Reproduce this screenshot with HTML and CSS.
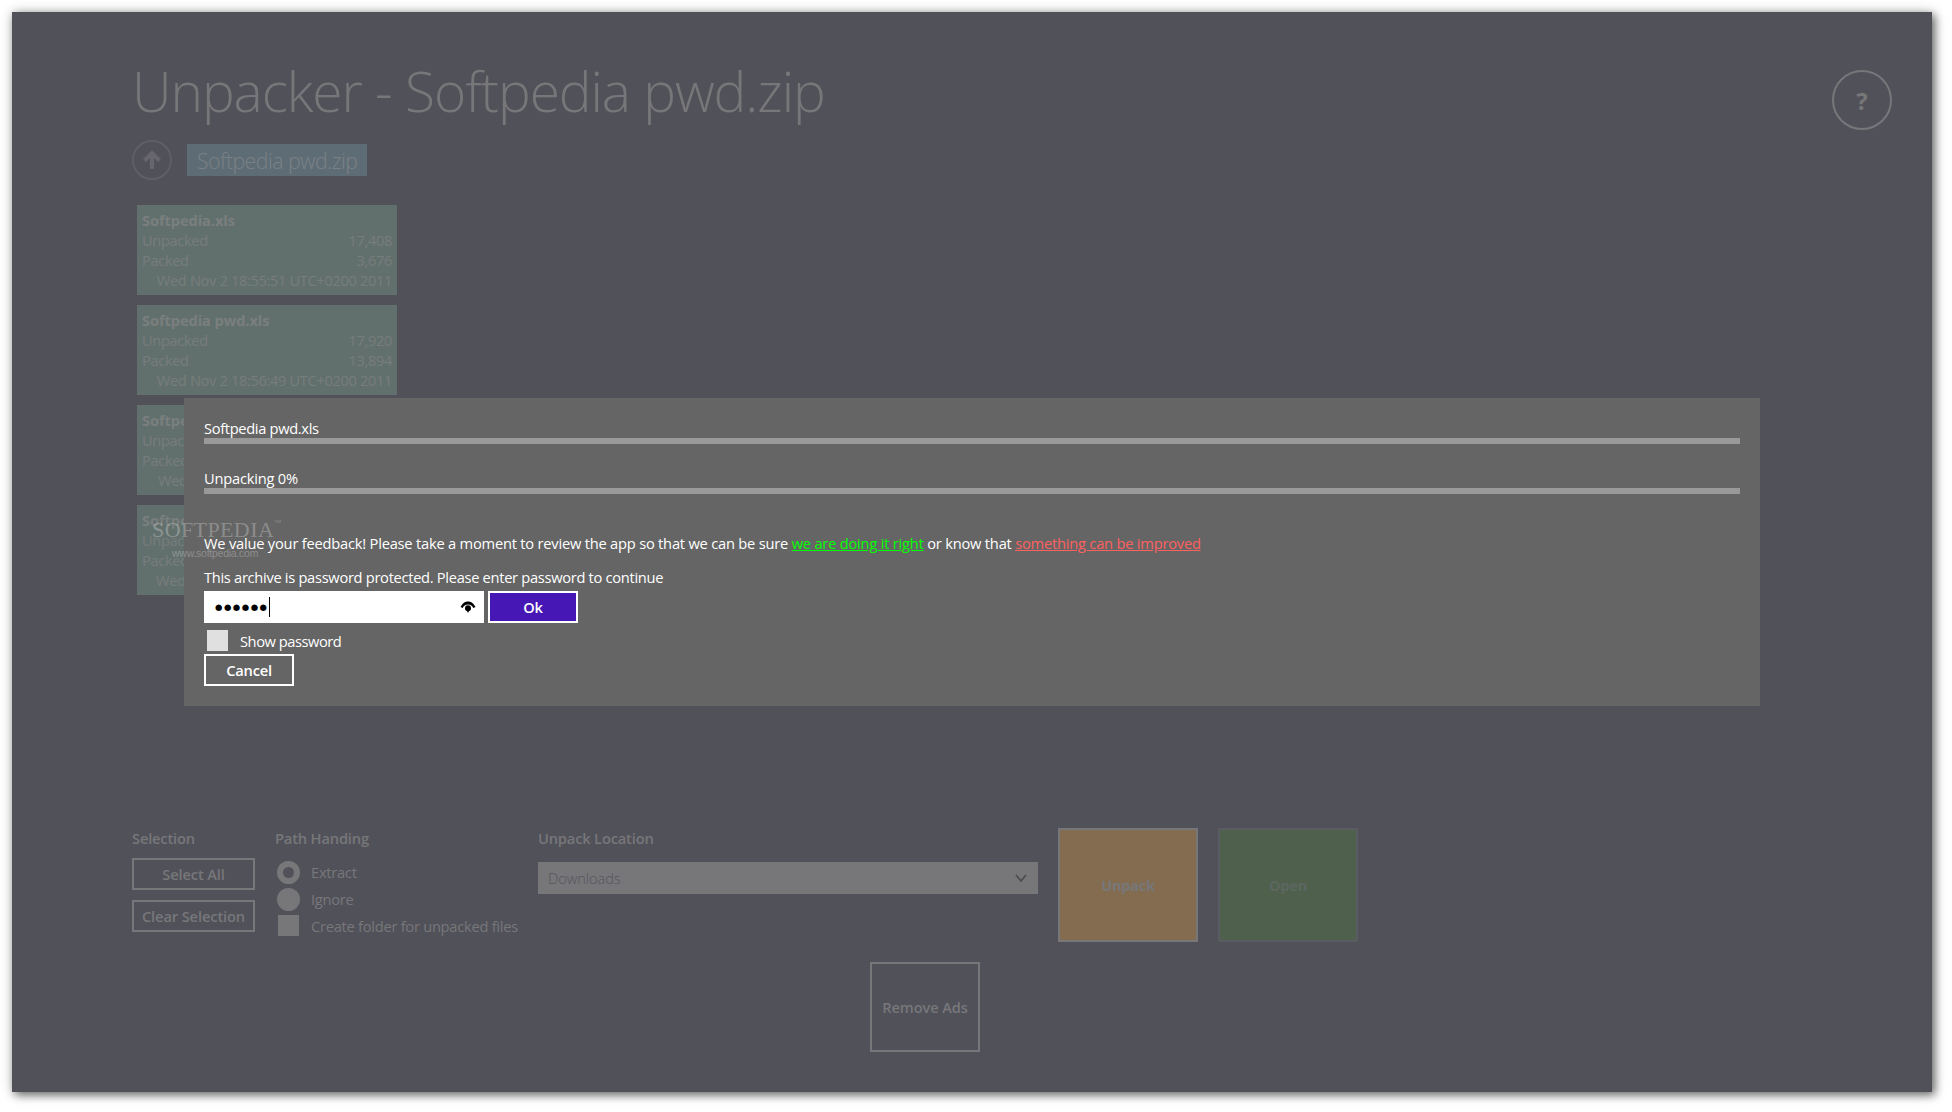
FILE: index.html
```html
<!DOCTYPE html>
<html lang="en">
<head>
<meta charset="utf-8">
<title>Unpacker</title>
<link rel="stylesheet" href="styles.css">
</head>
<body>
<div class="window">
  <header class="top">
    <h1 class="title">Unpacker - Softpedia pwd.zip</h1>
    <div class="help">?</div>
  </header>
  <nav class="crumbs">
    <div class="up">
      <svg width="40" height="40" viewBox="0 0 40 40"><circle cx="20" cy="20" r="19" fill="none" stroke="#5f5f66" stroke-width="2"/><path d="M12.5 20.5 L20 13 L27.5 20.5 M20 14 V29" fill="none" stroke="#66666c" stroke-width="4"/></svg>
    </div>
    <div class="crumb">Softpedia pwd.zip</div>
  </nav>
  <section class="files">
    <article class="card">
      <div class="name">Softpedia.xls</div>
      <div class="row"><span>Unpacked</span><span>17,408</span></div>
      <div class="row"><span>Packed</span><span>3,676</span></div>
      <div class="date">Wed Nov 2 18:55:51 UTC+0200 2011</div>
    </article>
    <article class="card">
      <div class="name">Softpedia pwd.xls</div>
      <div class="row"><span>Unpacked</span><span>17,920</span></div>
      <div class="row"><span>Packed</span><span>13,894</span></div>
      <div class="date">Wed Nov 2 18:56:49 UTC+0200 2011</div>
    </article>
    <article class="card">
      <div class="name">Softpedia</div>
      <div class="row"><span>Unpacked</span></div>
      <div class="row"><span>Packed</span></div>
      <div class="date date-third">Wed</div>
    </article>
    <article class="card">
      <div class="name">Softpedia</div>
      <div class="row"><span>Unpacked</span></div>
      <div class="row"><span>Packed</span></div>
      <div class="date date-fourth">Wed</div>
    </article>
  </section>
  <section class="controls">
    <div class="col-selection">
      <div class="group-label">Selection</div>
      <div class="btn btn-first">Select All</div>
      <div class="btn">Clear Selection</div>
    </div>
    <div class="col-path">
      <div class="group-label">Path Handing</div>
      <div class="opts">
        <div class="opt"><span class="radio radio-on"></span>Extract</div>
        <div class="opt"><span class="radio"></span>Ignore</div>
        <div class="opt"><span class="check"></span>Create folder for unpacked files</div>
      </div>
    </div>
    <div class="col-location">
      <div class="group-label">Unpack Location</div>
      <div class="select">
        <span>Downloads</span>
        <svg width="12" height="8" viewBox="0 0 12 8"><path d="M1 1 L6 7 L11 1" fill="none" stroke="#4a4a4e" stroke-width="1.6"/></svg>
      </div>
    </div>
    <div class="tile tile-unpack">Unpack</div>
    <div class="tile tile-open">Open</div>
  </section>
  <div class="ads-row"><div class="ads">Remove Ads</div></div>

  <div class="dialog">
    <div class="line line-first">Softpedia pwd.xls</div>
    <div class="bar"></div>
    <div class="line line-second">Unpacking 0%</div>
    <div class="bar"></div>
    <p class="feedback">We value your feedback! Please take a moment to review the app so that we can be sure <a class="good" href="#">we are doing it right</a> or know that <a class="bad" href="#">something can be improved</a></p>
    <p class="prompt">This archive is password protected. Please enter password to continue</p>
    <div class="pw-row">
      <div class="pw-input">
        <span class="dots">●●●●●●</span><span class="caret"></span>
        <svg class="eye" width="16" height="12" viewBox="0 0 16 12"><path d="M0.5 6 C3 1.5 5.5 0.5 8 0.5 C10.5 0.5 13 1.5 15.5 6 L13.3 7 C12 4.6 10.2 3.6 8 3.6 C5.8 3.6 4 4.6 2.7 7 Z" fill="#000"/><circle cx="8" cy="7.2" r="3" fill="#000"/><path d="M7 10 H9 L8 12 Z" fill="#000"/></svg>
      </div>
      <div class="ok">Ok</div>
    </div>
    <div class="show"><span class="show-box"></span>Show password</div>
    <div class="cancel">Cancel</div>
  </div>

  <div class="wm">
    <div class="wm-main">SOFTPEDIA<sup class="wm-tm">™</sup></div>
    <div class="wm-url">www.softpedia.com</div>
  </div>
</div>
</body>
</html>
```

FILE: styles.css
```css
* { box-sizing: border-box; }
html, body { margin: 0; padding: 0; background: #fff; }
body { width: 1952px; height: 1112px; overflow: hidden; padding: 12px; }

.window {
  position: relative;
  width: 1920px;
  height: 1080px;
  padding: 0 40px 0 120px;
  background: #515159;
  box-shadow: 3px 3px 9px rgba(0, 0, 0, .55), 0 0 12px rgba(0, 0, 0, .18);
  font-family: "Open Sans", "Noto Sans", sans-serif;
  font-size: 14.67px;
  color: #77777a;
  overflow: hidden;
}

.top { display: flex; justify-content: space-between; align-items: flex-start; height: 128px; }
.title { margin: 45px 0 0; font-size: 55px; font-weight: 300; line-height: 68px; letter-spacing: -1.05px; color: #77777a; }
.help {
  width: 60px; height: 60px; margin-top: 58px; border: 2px solid #77777a; border-radius: 50%;
  display: flex; align-items: center; justify-content: center;
  font-size: 24px; font-weight: 700; color: #77777a;
}

.crumbs { display: flex; align-items: center; gap: 15px; height: 40px; }
.up { width: 40px; height: 40px; }
.up svg { display: block; }
.crumb { height: 32px; width: 180px; padding-left: 10px; background: #5e6d75; font-size: 21.33px; font-weight: 300; line-height: 34px; letter-spacing: -.55px; color: #7b8085; white-space: nowrap; }

.files { display: flex; flex-direction: column; gap: 10px; margin: 25px 0 0 5px; height: 390px; }
.card { width: 260px; height: 90px; padding: 5px; background: #62706d; line-height: 20px; color: #777d7c; letter-spacing: -.36px; font-weight: 400; white-space: nowrap; }
.name { font-weight: 700; color: #7a7f7e; letter-spacing: -.1px; }
.row { display: flex; justify-content: space-between; }
.date { text-align: right; }
.date-third { text-align: left; padding-left: 16px; }
.date-fourth { text-align: left; padding-left: 14px; }

.controls { display: flex; align-items: flex-start; margin-top: 233px; height: 114px; }
.group-label { height: 20px; padding-top: 1px; line-height: 18px; font-weight: 600; letter-spacing: -.17px; color: #77777a; white-space: nowrap; }
.col-selection { width: 123px; margin-right: 20px; }
.btn { height: 32px; border: 2px solid #77777a; display: flex; align-items: center; justify-content: center; font-weight: 600; letter-spacing: -.12px; color: #77777a; white-space: nowrap; margin-top: 10px; }
.col-path { width: 263px; }
.opts { display: flex; flex-direction: column; padding: 10px 0 0 2px; }
.opt { display: flex; align-items: center; height: 27px; letter-spacing: -.26px; color: #77777a; white-space: nowrap; }
.radio { width: 23px; height: 23px; margin: 2px 11px 0 0; border-radius: 50%; background: #77777a; display: flex; align-items: center; justify-content: center; flex: none; }
.radio-on::after { content: ""; width: 11px; height: 11px; border-radius: 50%; background: #515159; }
.check { width: 21px; height: 21px; margin: 0 12px 0 1px; background: #77777a; flex: none; }
.col-location { width: 500px; margin-right: 20px; }
.select { height: 32px; margin-top: 14px; padding: 0 11px 0 10px; background: #77777a; color: #55555a; display: flex; align-items: center; justify-content: space-between; font-weight: 300; letter-spacing: -.1px; }
.tile { width: 140px; height: 114px; display: flex; align-items: center; justify-content: center; font-weight: 700; letter-spacing: -.3px; }
.tile-unpack { background: #846c50; border: 2px solid #77777a; color: #77777a; margin-right: 20px; }
.tile-open { background: #4f614c; border: 2px solid #5b5b63; color: #5c6661; }

.ads-row { margin-top: 20px; padding-left: 738px; }
.ads { width: 110px; height: 90px; border: 2px solid #77777a; display: flex; align-items: center; justify-content: center; font-weight: 600; letter-spacing: -.12px; color: #77777a; white-space: nowrap; }

.dialog { position: absolute; left: 172px; top: 386px; width: 1576px; height: 308px; padding: 20px 20px 0; background: #656565; color: #fff; letter-spacing: -.21px; }
.line { height: 20px; line-height: 20px; }
.line-first { letter-spacing: -.33px; }
.line-second { margin-top: 24px; }
.bar { height: 6px; background: #999; }
.feedback { margin: 39px 0 0; height: 20px; line-height: 20px; white-space: nowrap; }
.prompt { margin: 14px 0 0; height: 20px; line-height: 20px; letter-spacing: -.3px; white-space: nowrap; }
.good { color: #00ff00; }
.bad { color: #ff6060; }
.pw-row { display: flex; gap: 4px; margin-top: 4px; }
.pw-input { position: relative; width: 280px; height: 32px; background: #fff; color: #000; display: flex; align-items: center; padding-left: 11px; }
.dots { font-size: 8.5px; letter-spacing: 1.5px; font-family: "DejaVu Sans", sans-serif; }
.caret { width: 1px; height: 20px; background: #000; margin-left: 0; }
.eye { position: absolute; left: 256px; top: 10px; }
.ok { width: 90px; height: 32px; background: #4617b4; border: 2px solid #fff; display: flex; align-items: center; justify-content: center; font-weight: 600; }
.show { display: flex; align-items: center; height: 21px; margin: 7px 0 0 3px; letter-spacing: -.45px; }
.show-box { width: 21px; height: 21px; margin-right: 12px; background: #e0e0e0; }
.cancel { width: 90px; height: 32px; margin-top: 3px; border: 2px solid #fff; display: flex; align-items: center; justify-content: center; font-weight: 600; }

.wm { position: absolute; left: 140px; top: 506px; font-family: "Liberation Serif", serif; color: rgba(255, 255, 255, .27); }
.wm-main { font-size: 22px; line-height: 24px; letter-spacing: .4px; }
.wm-tm { font-size: 7px; vertical-align: top; line-height: 10px; }
.wm-url { margin: 5px 0 0 20px; font-family: "Liberation Sans", sans-serif; font-size: 10.5px; line-height: 12px; letter-spacing: -.25px; }
```
